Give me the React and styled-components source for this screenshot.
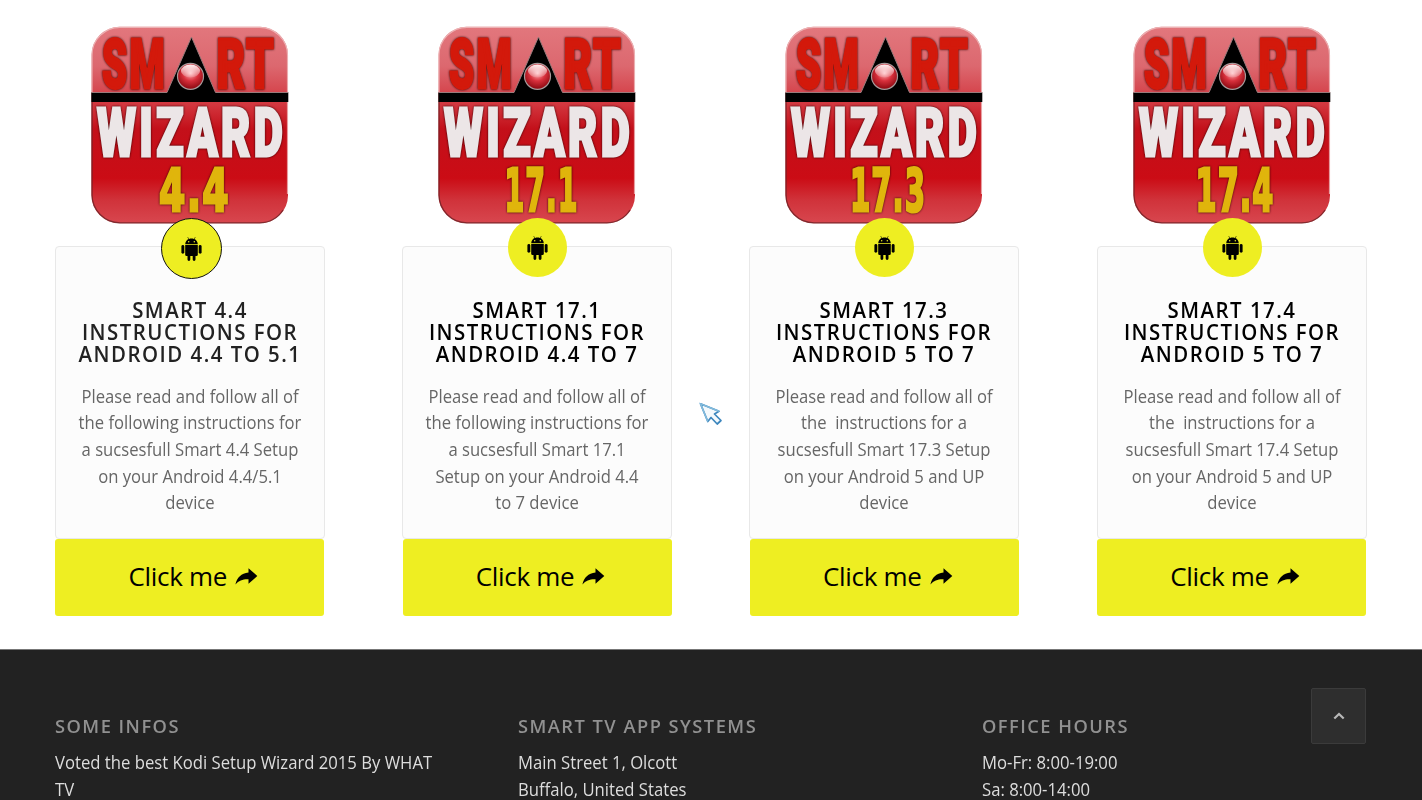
import styled, { createGlobalStyle } from "styled-components";

const cards = [
  {
    version: "4.4",
    numX: 68,
    numWidth: 71,
    title: ["SMART 4.4", "INSTRUCTIONS FOR", "ANDROID 4.4 TO 5.1"],
    text: [
      "Please read and follow all of",
      "the following instructions for",
      "a sucsesfull Smart 4.4 Setup",
      "on your Android 4.4/5.1",
      "device",
    ],
    active: true,
  },
  {
    version: "17.1",
    numX: 66.5,
    numWidth: 74,
    title: ["SMART 17.1", "INSTRUCTIONS FOR", "ANDROID 4.4 TO 7"],
    text: [
      "Please read and follow all of",
      "the following instructions for",
      "a sucsesfull Smart 17.1",
      "Setup on your Android 4.4",
      "to 7 device",
    ],
  },
  {
    version: "17.3",
    numX: 65,
    numWidth: 76,
    title: ["SMART 17.3", "INSTRUCTIONS FOR", "ANDROID 5 TO 7"],
    text: [
      "Please read and follow all of",
      "the \u00a0instructions for a",
      "sucsesfull Smart 17.3 Setup",
      "on your Android 5 and UP",
      "device",
    ],
  },
  {
    version: "17.4",
    numX: 62.5,
    numWidth: 79,
    title: ["SMART 17.4", "INSTRUCTIONS FOR", "ANDROID 5 TO 7"],
    text: [
      "Please read and follow all of",
      "the \u00a0instructions for a",
      "sucsesfull Smart 17.4 Setup",
      "on your Android 5 and UP",
      "device",
    ],
  },
];

const infos = [
  { title: "SOME INFOS", lines: ["Voted the best Kodi Setup Wizard 2015 By WHAT", "TV"] },
  { title: "SMART TV APP SYSTEMS", lines: ["Main Street 1, Olcott", "Buffalo, United States"] },
  { title: "OFFICE HOURS", lines: ["Mo-Fr: 8:00-19:00", "Sa: 8:00-14:00"] },
];

const Logo = ({ version, numX, numWidth }) => {
  const id = version.replace(".", "-");
  return (
    <LogoSvg viewBox="0 0 198 198">
      <defs>
        <linearGradient id={`bg-${id}`} x1="0" y1="0" x2="0" y2="1">
          <stop offset="0" stopColor="#e2777d" />
          <stop offset="0.2" stopColor="#dc686f" />
          <stop offset="0.4" stopColor="#d2353d" />
          <stop offset="0.52" stopColor="#c3101a" />
          <stop offset="0.77" stopColor="#cb0c15" />
          <stop offset="0.88" stopColor="#d0323a" />
          <stop offset="1" stopColor="#d8474f" />
        </linearGradient>
        <radialGradient id={`ball-${id}`} cx="0.5" cy="0.38" r="0.6">
          <stop offset="0" stopColor="#ffb3b8" />
          <stop offset="0.5" stopColor="#d8303c" />
          <stop offset="1" stopColor="#8e0a12" />
        </radialGradient>
        <linearGradient id={`shine-${id}`} x1="0" y1="0" x2="0" y2="1">
          <stop offset="0" stopColor="#fff" stopOpacity="0.95" />
          <stop offset="1" stopColor="#fff" stopOpacity="0.15" />
        </linearGradient>
      </defs>
      <rect x="0.500" y="0.800" width="196.500" height="196.500" rx="28" fill={`url(#bg-${id})`} />
      <path d="M1 76V168.500A28 28 0 0 0 29 196.800H168.500A28 28 0 0 0 192 184" fill="none" stroke="#6c2226" strokeOpacity="0.8" strokeWidth="1.300" />
      <path d="M1 66V29A28 28 0 0 1 29 1.300H168.500A28 28 0 0 1 196.500 29V168" fill="none" stroke="#efc0c2" strokeOpacity="0.8" strokeWidth="1.200" />
      <path d="M0.300 66.500H76L100.500 11L124.500 66.500H197.300V76H0.300Z" fill="#000" />
      <path d="M0.300 66.500H76L100.500 11L124.500 66.500H197.300" fill="none" stroke="#9b7b7c" strokeWidth="1" />
      <circle cx="99.500" cy="50.300" r="13" fill={`url(#ball-${id})`} stroke="#a89a9b" strokeWidth="1.200" />
      <ellipse cx="99.500" cy="45" rx="9.500" ry="6.500" fill={`url(#shine-${id})`} />
      <LogoText x="11" y="61.500" fontSize="69" textLength="65" $gap={4} $fill="#d3190b">SM</LogoText>
      <LogoText x="125.500" y="61.500" fontSize="69" textLength="59" $gap={3} $fill="#d3190b">RT</LogoText>
      <LogoText x="6" y="130" fontSize="67" textLength="189" $gap={5} $fill="#ece6e7">WIZARD</LogoText>
      <LogoText x={numX} y="184.800" fontSize="58" textLength={numWidth} $gap={2} $fill="#e0b50c" $slab>{version}</LogoText>
    </LogoSvg>
  );
};

const AndroidIcon = () => (
  <svg width="21" height="24" viewBox="0 0 21 24">
    <path d="M4.200 7.200C4.300 4.700 5.800 3 7.600 2.100L6.500 0.400L6.900 0.100L8.100 1.900C9.600 1.400 11.400 1.400 12.900 1.900L14.100 0.100L14.500 0.400L13.400 2.100C15.200 3 16.700 4.700 16.800 7.200Z" />
    <circle cx="7.700" cy="4.700" r="0.750" fill="#eeee22" />
    <circle cx="13.300" cy="4.700" r="0.750" fill="#eeee22" />
    <path d="M4.200 8.100H16.800V17.700Q16.800 19.100 15.400 19.100H14.500V22.500A1.400 1.400 0 0 1 11.700 22.500V19.100H9.300V22.500A1.400 1.400 0 0 1 6.500 22.500V19.100H5.600Q4.200 19.100 4.200 17.700Z" />
    <rect x="0.400" y="8" width="2.900" height="8.800" rx="1.450" />
    <rect x="17.700" y="8" width="2.900" height="8.800" rx="1.450" />
  </svg>
);

const ShareIcon = () => (
  <svg width="23" height="17" viewBox="0 0 23 17">
    <path d="M13.500 0.300L22.300 8L13.500 15.700V11.200C8 11 4 12.200 0.400 16.600C2 9.800 6.200 5.200 13.500 4.600Z" />
  </svg>
);

const App = () => (
  <>
    <GlobalStyle />
    <Page>
      <Cards>
        {cards.map((card) => (
          <Column key={card.version}>
            <Logo version={card.version} numX={card.numX} numWidth={card.numWidth} />
            <Box>
              <Badge $active={card.active}>
                <AndroidIcon />
              </Badge>
              <Title $active={card.active}>
                {card.title.map((line) => (
                  <span key={line}>{line}</span>
                ))}
              </Title>
              <Text>
                {card.text.map((line) => (
                  <span key={line}>{line}</span>
                ))}
              </Text>
            </Box>
            <Button>
              Click me <ShareIcon />
            </Button>
          </Column>
        ))}
      </Cards>
      <Footer>
        {infos.map((info) => (
          <div key={info.title}>
            <FooterTitle>{info.title}</FooterTitle>
            {info.lines.map((line) => (
              <FooterLine key={line}>{line}</FooterLine>
            ))}
          </div>
        ))}
      </Footer>
      <ToTop>
        <svg width="12" height="8" viewBox="0 0 12 8">
          <path d="M1.300 6.500L6 2L10.700 6.500" fill="none" stroke="#b8b8b8" strokeWidth="2.200" />
        </svg>
      </ToTop>
      <Pointer viewBox="0 0 24 24">
        <path d="M1.500 1.800L20 9.300L15.500 12L22 18.500L18.200 22L12 15.500L8.800 19.500Z" fill="#f4f9fc" stroke="#3c86bd" strokeWidth="1.700" strokeLinejoin="round" />
        <path d="M8.800 19.500L1.500 1.800L20 9.300" fill="none" stroke="#83bbdc" strokeWidth="1.500" />
      </Pointer>
    </Page>
  </>
);

const GlobalStyle = createGlobalStyle`
  * {
    box-sizing: border-box;
  }

  body {
    margin: 0;
    background: #fff;
    font-family: "Open Sans", "Noto Sans", sans-serif;
    overflow: hidden;
  }
`;

const Page = styled.div`
  position: relative;
  width: 1422px;
  height: 800px;
  overflow: hidden;
`;

const Cards = styled.section`
  display: flex;
  justify-content: space-between;
  height: 649px;
  padding: 26px 55.400px 0 54.800px;
`;

const Column = styled.div`
  width: 270px;
  display: flex;
  flex-direction: column;
  align-items: center;
`;

const LogoSvg = styled.svg`
  display: block;
  width: 198px;
  height: 198px;
  flex: none;
  overflow: visible;
`;

const LogoText = styled.text.attrs({ lengthAdjust: "spacingAndGlyphs" })`
  font-family: ${({ $slab }) => ($slab ? '"DejaVu Sans"' : "Roboto")}, sans-serif;
  font-weight: 900;
  letter-spacing: ${({ $gap }) => $gap}px;
  fill: ${({ $fill }) => $fill};
  stroke: ${({ $fill }) => $fill};
  stroke-width: 3px;
  filter: drop-shadow(0 0.5px 1px rgba(30, 0, 0, 0.9));
`;

const Box = styled.div`
  position: relative;
  width: 100%;
  height: 293px;
  margin-top: 22px;
  padding-top: 51px;
  background: #fcfcfc;
  border: 1px solid #e8e8e8;
  border-radius: 4px;
  text-align: center;
`;

const Badge = styled.div`
  position: absolute;
  top: -29px;
  left: 105px;
  width: ${({ $active }) => ($active ? "61px" : "59px")};
  height: ${({ $active }) => ($active ? "61px" : "59px")};
  display: flex;
  align-items: center;
  justify-content: center;
  background: #eeee22;
  border: ${({ $active }) => ($active ? "1px solid #111" : "none")};
  border-radius: 50%;
`;

const Title = styled.h3`
  margin: 0;
  font-size: 22px;
  line-height: 22.200px;
  font-weight: 600;
  letter-spacing: 1.600px;
  transform: scaleX(0.928);
  color: ${({ $active }) => ($active ? "#222" : "#000")};

  span {
    display: block;
    white-space: nowrap;
  }
`;

const Text = styled.p`
  margin: 18px 0 0;
  font-size: 17.600px;
  line-height: 26.700px;
  transform: scaleX(0.946);
  color: #666;

  span {
    display: block;
    white-space: nowrap;
  }
`;

const Button = styled.a`
  width: 269px;
  height: 77px;
  display: flex;
  align-items: center;
  justify-content: center;
  gap: 8px;
  padding: 0 0 3px 7px;
  background: #eeee22;
  border-radius: 3px;
  color: #000;
  font-size: 26px;
  letter-spacing: -0.300px;
`;

const Footer = styled.footer`
  display: grid;
  grid-template-columns: repeat(3, 385.300px);
  column-gap: 78px;
  height: 151px;
  padding: 62px 55px 0;
  background: #222;
  border-top: 1px solid #777;
`;

const FooterTitle = styled.h4`
  margin: 0 0 10px;
  font-size: 18.700px;
  line-height: 27px;
  font-weight: 600;
  letter-spacing: 1.500px;
  transform: scaleX(0.978);
  transform-origin: left;
  color: #919191;
`;

const FooterLine = styled.div`
  font-size: 17.600px;
  line-height: 26.700px;
  transform: scaleX(0.948);
  transform-origin: left;
  white-space: nowrap;
  color: #ddd;
`;

const ToTop = styled.a`
  position: absolute;
  right: 56px;
  bottom: 56px;
  width: 55px;
  height: 56px;
  display: flex;
  align-items: center;
  justify-content: center;
  background: #2e2e2e;
  border: 1px solid #3b3b3b;
  border-radius: 2px;
`;

const Pointer = styled.svg`
  position: absolute;
  left: 699px;
  top: 402px;
  width: 24px;
  height: 24px;
`;

export default App;
